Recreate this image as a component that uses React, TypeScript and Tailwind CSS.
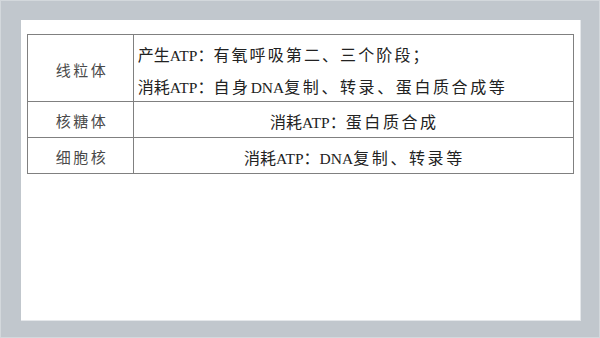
import React from "react";

const FONT = { fontFamily: '"Liberation Serif", "Noto Sans CJK SC", serif' };

function W({ children }: { children: React.ReactNode }) {
  return <span className="tracking-[2.6px]">{children}</span>;
}

function L({ children }: { children: React.ReactNode }) {
  return <span className="text-[15.5px]">{children}</span>;
}

export default function App() {
  return (
    <div
      className="w-[600px] h-[338px] bg-[#c1c7cd] pt-[19px] pl-[20px] border border-[#d3d8dc]"
      style={FONT}
    >
      <div className="w-[560px] h-[301px] bg-white pt-[14px] pl-[6px] border-r border-b border-[#e4e7ea]">
        <div className="w-[547px] border-l border-t border-[#808080] text-[16px]">
          {/* row 1 */}
          <div className="flex h-[67px]">
            <div className="w-[106px] border-r border-b border-[#808080] flex items-center justify-center pt-[7px] text-[#4a4a4a] text-[15px]">
              <span className="tracking-[2.5px] pl-[3px]">线粒体</span>
            </div>
            <div className="w-[441px] border-r border-b border-[#808080] pt-[5px] pl-[4px] text-[#222] leading-[32px] whitespace-nowrap">
              <div>
                产生<L>ATP</L>：<span className="tracking-[2.1px]">有氧呼吸第二、三个阶段；</span>
              </div>
              <div>
                消耗<L>ATP</L>：<W>自身</W><L>DNA</L><W>复制、转录、蛋白质合成等</W>
              </div>
            </div>
          </div>
          {/* row 2 */}
          <div className="flex h-[36px]">
            <div className="w-[106px] border-r border-b border-[#808080] flex items-center justify-center pt-[6px] text-[#4a4a4a] text-[15px]">
              <span className="tracking-[2.5px] pl-[3px]">核糖体</span>
            </div>
            <div className="w-[441px] border-r border-b border-[#808080] flex items-center justify-center pt-[6px] text-[#222] whitespace-nowrap">
              <span className="pl-[2px]">
                消耗<L>ATP</L>：<W>蛋白质合成</W>
              </span>
            </div>
          </div>
          {/* row 3 */}
          <div className="flex h-[36px]">
            <div className="w-[106px] border-r border-b border-[#808080] flex items-center justify-center pt-[6px] text-[#4a4a4a] text-[15px]">
              <span className="tracking-[2.5px] pl-[3px]">细胞核</span>
            </div>
            <div className="w-[441px] border-r border-b border-[#808080] flex items-center justify-center pt-[6px] text-[#222] whitespace-nowrap">
              <span className="pl-[2px]">
                消耗<L>ATP</L>：<L>DNA</L><W>复制、转录等</W>
              </span>
            </div>
          </div>
        </div>
      </div>
    </div>
  );
}
